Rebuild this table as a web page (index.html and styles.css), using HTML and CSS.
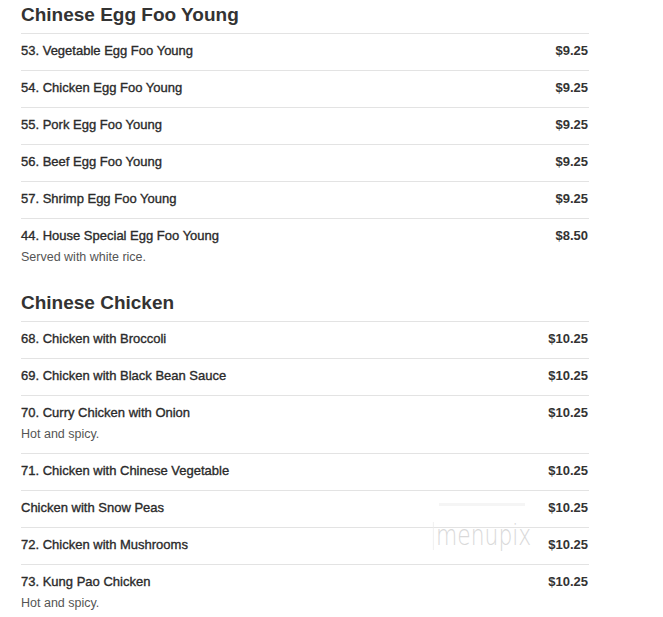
FILE: index.html
```html
<!DOCTYPE html>
<html lang="en">
<head>
    <meta charset="UTF-8">
    <meta name="viewport" content="width=device-width, initial-scale=1.0">
    <title>Menu</title>
    <link rel="stylesheet" href="styles.css">
</head>
<body>

<div class="menu">

    <!-- Egg Foo Young -->
    <div class="section">
        <h2>Chinese Egg Foo Young</h2>
        <div class="item">
            <div class="item-row"><span class="name">53. Vegetable Egg Foo Young</span><span class="price">$9.25</span></div>
        </div>
        <div class="item">
            <div class="item-row"><span class="name">54. Chicken Egg Foo Young</span><span class="price">$9.25</span></div>
        </div>
        <div class="item">
            <div class="item-row"><span class="name">55. Pork Egg Foo Young</span><span class="price">$9.25</span></div>
        </div>
        <div class="item">
            <div class="item-row"><span class="name">56. Beef Egg Foo Young</span><span class="price">$9.25</span></div>
        </div>
        <div class="item">
            <div class="item-row"><span class="name">57. Shrimp Egg Foo Young</span><span class="price">$9.25</span></div>
        </div>
        <div class="item">
            <div class="item-row"><span class="name">44. House Special Egg Foo Young</span><span class="price">$8.50</span></div>
            <div class="desc">Served with white rice.</div>
        </div>
    </div>

    <!-- Chicken -->
    <div class="section">
        <h2>Chinese Chicken</h2>
        <div class="item">
            <div class="item-row"><span class="name">68. Chicken with Broccoli</span><span class="price">$10.25</span></div>
        </div>
        <div class="item">
            <div class="item-row"><span class="name">69. Chicken with Black Bean Sauce</span><span class="price">$10.25</span></div>
        </div>
        <div class="item">
            <div class="item-row"><span class="name">70. Curry Chicken with Onion</span><span class="price">$10.25</span></div>
            <div class="desc">Hot and spicy.</div>
        </div>
        <div class="item">
            <div class="item-row"><span class="name">71. Chicken with Chinese Vegetable</span><span class="price">$10.25</span></div>
        </div>
        <div class="item">
            <div class="item-row"><span class="name">Chicken with Snow Peas</span><span class="price">$10.25</span></div>
        </div>
        <div class="item">
            <div class="item-row"><span class="name">72. Chicken with Mushrooms</span><span class="price">$10.25</span></div>
        </div>
        <div class="item">
            <div class="item-row"><span class="name">73. Kung Pao Chicken</span><span class="price">$10.25</span></div>
            <div class="desc">Hot and spicy.</div>
        </div>
    </div>

    <!-- watermark -->
    <div class="watermark">
        <div class="wm-bar"></div>
        <span class="wm-logo">menupix</span>
    </div>
</div>

</body>
</html>
```

FILE: styles.css
```css
body {
    margin: 0;
    padding: 3px 0 0 21px;
    font-family: "Liberation Sans", Arial, sans-serif;
    color: #333;
    background: #fff;
}

.menu {
    position: relative;
    width: 568px;
}

.section + .section {
    margin-top: 15px;
}

h2 {
    margin: 0 0 6px;
    font-size: 19px;
    line-height: 24px;
    font-weight: bold;
    color: #333;
}

.item {
    border-top: 1px solid #e3e3e3;
    padding: 8px 1px 10px 0;
    font-size: 13px;
}

.item-row {
    display: flex;
    justify-content: space-between;
    line-height: 18px;
}

.name {
    color: #2b2b2b;
    -webkit-text-stroke: 0.35px #2b2b2b;
}

.price {
    font-weight: bold;
    color: #333;
}

.desc {
    margin-top: 4px;
    font-size: 12.5px;
    line-height: 17px;
    color: #555;
}

.watermark {
    position: absolute;
    left: 411px;
    top: 500px;
    width: 100px;
    display: flex;
    flex-direction: column;
    align-items: center;
    pointer-events: none;
}

.wm-bar {
    width: 86px;
    height: 3px;
    margin-bottom: 16px;
    background: #f5f5f5;
}

.wm-logo {
    font-family: "DejaVu Sans", sans-serif;
    font-weight: 200;
    font-size: 28px;
    line-height: 28px;
    color: #d9d9d9;
    border-left: 1px solid #ececec;
    padding-left: 3px;
    transform: scaleX(0.78);
}
```
